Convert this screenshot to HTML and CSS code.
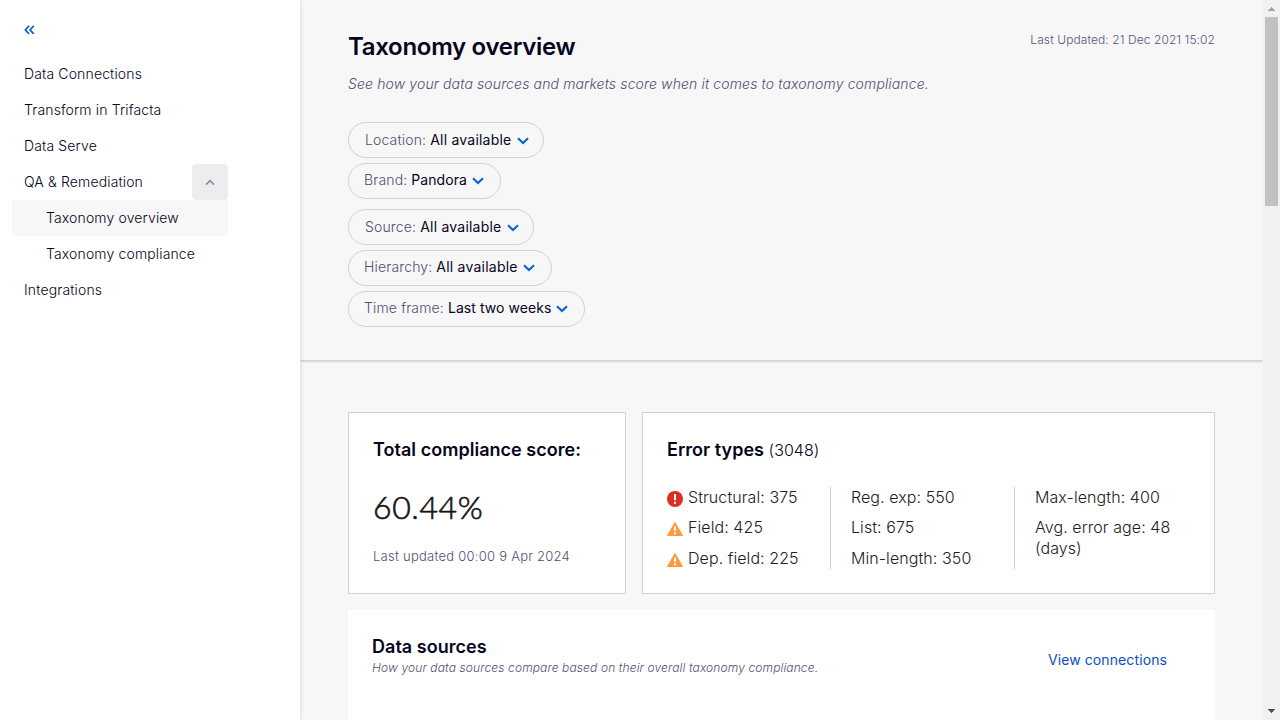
FILE: index.html
```html
<!DOCTYPE html>
<html lang="en">
<head>
<meta charset="utf-8">
<title>Taxonomy overview</title>
<link rel="stylesheet" href="styles.css">
</head>
<body>
<svg class="defs" width="0" height="0">
  <symbol id="chevron" viewBox="0 0 12 8"><path d="M1 1.2 6 6l5-4.8" fill="none" stroke="currentColor" stroke-width="2.1"/></symbol>
  <symbol id="warning" viewBox="0 0 16 14"><path d="M8 .5 15.5 13.5H.5Z" fill="#ff9a3c" stroke="#ff9a3c" stroke-linejoin="round"/><path d="M7 4.4h2v4.4H7zM7 10.2h2v2H7z" fill="#fff"/></symbol>
</svg>
<div class="app">
  <nav class="sidebar">
    <button class="collapse" aria-label="Collapse menu"><svg width="11" height="10" viewBox="0 0 11 10"><path d="M5 .9 1.3 4.9 5 8.9M9.7.9 6 4.9l3.7 4" fill="none" stroke="currentColor" stroke-width="1.7"/></svg></button>
    <a class="item">Data Connections</a>
    <a class="item">Transform in Trifacta</a>
    <a class="item">Data Serve</a>
    <div class="item group"><a>QA &amp; Remediation</a><button class="toggle" aria-label="Collapse group"><svg width="10" height="7" viewBox="0 0 10 7"><path d="M1 5.6 5 1.6l4 4" fill="none" stroke="currentColor" stroke-width="1.5"/></svg></button></div>
    <a class="item sub active">Taxonomy overview</a>
    <a class="item sub">Taxonomy compliance</a>
    <a class="item">Integrations</a>
  </nav>
  <main class="main">
    <header class="header">
      <div class="title-row"><h1>Taxonomy overview</h1><span class="updated">Last Updated: 21 Dec 2021 15:02</span></div>
      <p class="intro">See how your data sources and markets score when it comes to taxonomy compliance.</p>
      <div class="filters">
        <button class="pill first w-location"><span>Location:</span><b>All available</b><svg class="chev"><use href="#chevron"/></svg></button>
        <button class="pill w-brand"><span>Brand:</span><b>Pandora</b><svg class="chev"><use href="#chevron"/></svg></button>
      </div>
      <div class="filters">
        <button class="pill first w-source"><span>Source:</span><b>All available</b><svg class="chev"><use href="#chevron"/></svg></button>
        <button class="pill w-hierarchy"><span>Hierarchy:</span><b>All available</b><svg class="chev"><use href="#chevron"/></svg></button>
        <button class="pill w-time"><span>Time frame:</span><b>Last two weeks</b><svg class="chev"><use href="#chevron"/></svg></button>
      </div>
    </header>
    <div class="content">
      <div class="cards">
        <section class="card score">
          <h2>Total compliance score:</h2>
          <div class="value">60.44%</div>
          <div class="stamp">Last updated 00:00 9 Apr 2024</div>
        </section>
        <section class="card errors">
          <h2>Error types <span>(3048)</span></h2>
          <div class="columns">
            <ul>
              <li><svg class="icon" width="16" height="16" viewBox="0 0 16 16"><circle cx="8" cy="8" r="8" fill="#dc2e22"/><path d="M7 3h2v6.3H7zM7 10.8h2v2H7z" fill="#fff"/></svg>Structural: 375</li>
              <li><svg class="icon warn"><use href="#warning"/></svg>Field: 425</li>
              <li><svg class="icon warn"><use href="#warning"/></svg>Dep. field: 225</li>
            </ul>
            <ul><li>Reg. exp: 550</li><li>List: 675</li><li>Min-length: 350</li></ul>
            <ul><li>Max-length: 400</li><li>Avg. error age: 48 (days)</li></ul>
          </div>
        </section>
      </div>
      <section class="sources">
        <div><h2>Data sources</h2><p>How your data sources compare based on their overall taxonomy compliance.</p></div>
        <a class="link">View connections</a>
      </section>
    </div>
  </main>
  <div class="scrollbar">
    <svg width="17" height="17" viewBox="0 0 17 17" shape-rendering="crispEdges"><path d="M5 11 8.5 7 12 11Z" fill="#a3a3a3"/></svg>
    <div class="thumb"></div>
    <svg class="down" width="17" height="17" viewBox="0 0 17 17" shape-rendering="crispEdges"><path d="M5 6 8.5 10 12 6Z" fill="#505050"/></svg>
  </div>
</div>
</body>
</html>
```
FILE: styles.css
```css
* { box-sizing: border-box; }
body { margin: 0; height: 720px; overflow: hidden; font-family: Inter, "Liberation Sans", sans-serif; color: #05051e; background: #f7f7f7; }
h1, h2, p, ul { margin: 0; padding: 0; }
ul { list-style: none; }
button { font: inherit; border: 0; padding: 0; background: none; }
.defs { display: none; }
.app { display: flex; height: 720px; }

.sidebar { width: 300px; flex: none; background: #fff; padding: 20px 72px 0 12px; box-shadow: 0 0 5px rgba(0, 0, 0, .15); position: relative; }
.collapse { display: flex; align-items: center; height: 20px; margin: 0 0 16px 12px; color: #0b63ce; }
.item { display: flex; align-items: center; height: 36px; padding: 0 0 2px 12px; font-size: 14px; font-weight: 350; letter-spacing: .14px; border-radius: 4px; }
.group { justify-content: space-between; }
.toggle { width: 36px; height: 36px; margin-bottom: -2px; display: flex; align-items: center; justify-content: center; background: #ededef; border-radius: 4px; color: #8a8a9c; }
.sub { padding-left: 34px; }
.active { background: #f7f7f7; }

.main { flex: 1; min-width: 0; display: flex; flex-direction: column; }
.header { height: 360px; flex: none; padding: 32px 48px 0; box-shadow: 0 1px 3px rgba(0, 0, 0, .25); }
.title-row { display: flex; justify-content: space-between; }
h1 { font-size: 24px; line-height: 30px; font-weight: 600; letter-spacing: -.3px; }
.updated { font-size: 12px; line-height: 16px; font-weight: 350; color: #56567a; letter-spacing: .08px; }
.intro { margin: 12px 0 28px; font-size: 14px; line-height: 20px; font-style: italic; font-weight: 350; color: #505070; letter-spacing: .13px; }
.filters { display: flex; flex-direction: column; align-items: flex-start; gap: 5px; margin-bottom: 10px; }
.pill { display: flex; align-items: center; height: 36px; padding: 0 0 3px 15px; border: 1px solid #d0d0d8; border-radius: 18px; font-size: 14px; font-weight: 350; letter-spacing: .15px; color: #505070; }
.pill.first { padding: 0 0 2px 16px; }
.pill b { margin-left: 4px; font-weight: 400; letter-spacing: .22px; color: #05051e; }
.w-brand b, .w-time b { letter-spacing: .06px; }
.chev { width: 12px; height: 8px; margin: 3px 0 0 5px; color: #0b63ce; }
.first .chev { margin-left: 6px; }
.w-location { width: 196px; }
.w-brand { width: 153px; }
.w-source { width: 186px; }
.w-hierarchy { width: 204px; }
.w-time { width: 237px; }

.content { flex: 1; display: flex; flex-direction: column; padding: 52px 48px 0; }
.cards { display: flex; gap: 16px; height: 182px; }
.card { background: #fff; border: 1px solid #d0d0d8; padding: 23px 24px; }
.score { width: 278px; }
.errors { flex: 1; }
h2 { font-size: 18px; line-height: 27px; font-weight: 600; letter-spacing: .03px; }
.errors h2 span { font-size: 16px; font-weight: 350; }
.value { margin-top: 20px; font-family: Lato, Inter, sans-serif; font-size: 32px; line-height: 48px; font-weight: 300; letter-spacing: .6px; color: #151515; -webkit-text-stroke: .65px #151515; }
.stamp { margin-top: 15px; font-size: 13px; line-height: 20px; font-weight: 350; color: #505070; letter-spacing: .25px; }
.columns { display: grid; grid-template-columns: 164px 184px 164px; height: 82px; margin-top: 23px; font-size: 16px; line-height: 21px; font-weight: 350; letter-spacing: .08px; color: #212121; }
.columns ul { display: flex; flex-direction: column; gap: 9.4px; border-right: 1px solid #d0d0d8; }
.columns ul + ul { padding-left: 20px; }
.columns ul:last-child { border-right: 0; }
.columns li { display: flex; align-items: center; height: 21px; }
.columns ul:last-child li:last-child { height: 42px; }
.icon { width: 16px; height: 16px; margin: 3px 5px 0 0; }
.warn { height: 14px; margin-top: 3px; }

.sources { flex: 1; display: flex; justify-content: space-between; margin-top: 16px; padding: 24px 48px 0 24px; background: #fff; }
.sources h2 { line-height: 26px; }
.sources p { font-size: 12px; line-height: 16px; font-style: italic; font-weight: 350; color: #505070; letter-spacing: .12px; }
.link { margin-top: 16px; font-size: 14px; line-height: 20px; color: #0b50c0; letter-spacing: .1px; }

.scrollbar { width: 17px; flex: none; display: flex; flex-direction: column; background: #f1f1f1; position: relative; }
.scrollbar svg { display: block; flex: none; }
.thumb { width: 13px; height: 189px; margin-left: 2px; background: #c1c1c1; }
.scrollbar .down { margin-top: auto; }
```
